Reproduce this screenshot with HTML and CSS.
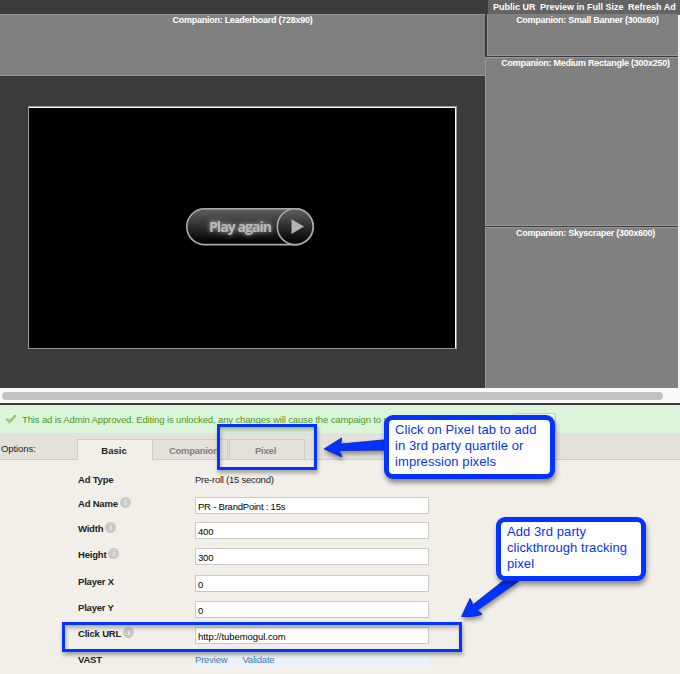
FILE: index.html
```html
<!DOCTYPE html>
<html lang="en">
<head>
<meta charset="utf-8">
<title>Ad Preview</title>
<link rel="stylesheet" href="styles.css">
</head>
<body>
<main class="page">
  <section class="preview">
    <div class="stage">
      <div class="leaderboard"><span>Companion: Leaderboard (728x90)</span></div>
      <div class="player">
        <svg class="play" width="130" height="40" viewBox="0 0 130 40">
          <defs>
            <linearGradient id="pill" x1="0" y1="0" x2="0" y2="1"><stop offset="0" stop-color="#606060"/><stop offset=".9" stop-color="#050505"/></linearGradient>
            <filter id="glow" x="-20%" y="-50%" width="140%" height="200%"><feGaussianBlur stdDeviation="2.5"/></filter>
          </defs>
          <rect x="1.800" y="1.800" width="126.400" height="35.800" rx="17.900" fill="url(#pill)" stroke="#aaa" stroke-width="1.600"/>
          <circle cx="110.200" cy="19.700" r="17.900" fill="url(#pill)" stroke="#aaa" stroke-width="1.600"/>
          <path d="M106.500 12.200v14.800L119 19.600z" fill="#b4b4b4"/>
          <text class="play-text" x="24" y="24.500" textLength="63" filter="url(#glow)" aria-hidden="true">Play again</text>
          <text class="play-text" x="24" y="24.500" textLength="63">Play again</text>
        </svg>
      </div>
    </div>
    <aside class="side">
      <nav class="tools"><span class="t-public">Public UR</span><span class="t-full">Preview in Full Size</span><span>Refresh Ad</span></nav>
      <div class="slot small"><span>Companion: Small Banner (300x60)</span></div>
      <div class="slot medium"><span>Companion: Medium Rectangle (300x250)</span></div>
      <div class="slot sky"><span>Companion: Skyscraper (300x600)</span></div>
    </aside>
  </section>
  <div class="scroll"><div class="thumb"></div></div>
  <div class="notice">
    <svg width="12" height="10" viewBox="0 0 12 10"><path d="M1 5.600l1.500-1 2 2L9.800 1.100l1.200.7L4.700 9z" fill="#a5dc84" stroke="#6ab548" stroke-width=".8"/></svg>
    <span class="t-notice">This ad is Admin Approved. Editing is unlocked, any changes will cause the campaign to p</span>
    <div class="notice-btn"></div>
  </div>
  <div class="options">
    <span class="options-label">Options:</span>
    <div class="tab active"><span>Basic</span></div>
    <div class="tab companion"><span>Companion</span></div>
    <div class="tab pixel"><span>Pixel</span></div>
  </div>
  <form class="form">
    <div class="row r1"><label>Ad Type</label><span class="value">Pre-roll (15 second)</span></div>
    <div class="row r2"><label>Ad Name<i class="info">i</i></label><div class="input">PR - BrandPoint : 15s</div></div>
    <div class="row"><label>Width<i class="info">i</i></label><div class="input">400</div></div>
    <div class="row r4"><label>Height<i class="info">i</i></label><div class="input">300</div></div>
    <div class="row"><label>Player X</label><div class="input">0</div></div>
    <div class="row"><label>Player Y</label><div class="input">0</div></div>
    <div class="row"><label>Click URL<i class="info">i</i></label><div class="input url">http://tubemogul.com</div></div>
    <div class="row r8"><label>VAST</label><div class="links"><span>Preview</span><span>Validate</span></div></div>
  </form>
  <div class="mark mark-pixel"></div>
  <div class="mark mark-url"></div>
  <svg class="arrows" width="680" height="274" viewBox="0 400 680 274">
    <path d="M324 449L341.500 438Q342 442.500 340 444L388 439.500V450L339 450.500Q341.500 454.500 342 457Z"/>
    <path d="M461.500 616.500L470 598.500Q472.500 601.500 472.500 605L503 581H519L477 610.500Q481 612 482 614.500Q473 617.500 461.500 616.500Z"/>
  </svg>
  <div class="note note-pixel">Click on Pixel tab to add<br>in 3rd party quartile or<br>impression pixels</div>
  <div class="note note-url">Add 3rd party<br>clickthrough tracking<br>pixel</div>
</main>
</body>
</html>
```
FILE: styles.css
```css
* { box-sizing: border-box; }
body { margin: 0; font: 9.5px/12px "Liberation Sans", Arial, sans-serif; color: #222; }
.page { position: relative; width: 680px; height: 674px; overflow: hidden; background: #f2efe9; }
span { white-space: nowrap; }

/* Ad preview */
.preview { display: flex; height: 388px; background: #3b3b3b; color: #fff; font-weight: bold; font-size: 9px; }
.stage { width: 485px; padding-top: 14px; }
.leaderboard { height: 62px; background: #808080; border: solid #999; border-width: 1px 0; text-align: center; line-height: 11px; letter-spacing: -.26px; }
.player { display: flex; justify-content: center; width: 429px; height: 243px; margin: 30px 0 0 28px; padding-top: 100px; background: #000; border: 1px solid #999; box-shadow: inset -1px 1px #fff; }
.play { margin-left: 15px; }
.play-text { font: bold 14px "Open Sans", sans-serif; fill: #b9b9b9; }

.side { display: flex; flex-direction: column; width: 195px; background: linear-gradient(90deg, transparent 193px, #f5f5f5 193px); }
.tools { display: flex; height: 15px; margin: 0 0 -1px 3px; padding-left: 5px; background: #646464; line-height: 14px; }
.tools span { flex: none; }
.t-public { width: 47px; }
.t-full { width: 88px; }
.slot { width: 193px; background: #808080; border: 1px solid #999; border-right: 0; text-align: center; line-height: 11px; letter-spacing: -.26px; margin-bottom: 1px; }
.small { width: 191px; height: 42px; margin-left: 2px; padding-left: 9px; border-top: 0; padding-top: 1px; }
.medium { height: 169px; padding-left: 7px; }
.sky { height: 161px; margin-bottom: 0; padding-left: 30px; text-align: left; border-bottom: 0; }

.scroll { height: 17px; padding: 4px 0 0 2px; background: #fafafa; border-bottom: 2px solid #3b3b3b; }
.thumb { width: 661px; height: 8px; border-radius: 4px; background: #c1c1c1; }

/* Approval notice */
.notice { display: flex; height: 28px; padding-left: 5px; align-items: center; background: #dcf5da; color: #4a9a21; }
.t-notice { flex: none; margin-left: 5px; width: 362px; padding-top: 1px; letter-spacing: -.13px; }
.notice-btn { flex: none; width: 43px; height: 20px; margin-left: 129px; align-self: flex-end; border: 1px solid #c6cbc5; border-radius: 2px; background: #edf1ec; }

/* Tabs */
.options { display: flex; align-items: flex-end; height: 27px; background: #e4e1da; border-bottom: 1px solid #cdcbc6; }
.options-label { width: 77px; padding-left: 1px; align-self: center; margin-top: 6px; letter-spacing: -.1px; }
.tab { width: 76px; height: 20px; border: 1px solid #cdcbc6; border-bottom: 0; padding-top: 4px; color: #818181; font-weight: bold; text-align: center; line-height: 14px; }
.active { height: 21px; margin-bottom: -1px; background: #f2efe9; color: #222; padding-right: 2px; }
.companion { width: 75px; padding-left: 16px; border-left: 0; text-align: left; letter-spacing: -.3px; }
.pixel { margin-left: 1px; padding-right: 3px; letter-spacing: -.2px; }

/* Settings form */
.form { padding: 13px 0 0 78px; letter-spacing: -.1px; }
.row { display: grid; grid-template-columns: 117px 234px; align-items: start; height: 26px; }
label { display: flex; font-weight: bold; line-height: 14px; letter-spacing: -.2px; }
.info { flex: none; width: 11px; height: 11px; margin: 0 0 0 2px; border-radius: 50%; background: #c9c9c7; color: #eee; font: bold 8px/11px "Liberation Serif", serif; text-align: center; }
.value { line-height: 14px; letter-spacing: -.24px; }
.input { height: 17px; padding: 1px 0 0 2px; background: #fff; border: 1px solid #c9c8c5; color: #000; line-height: 15px; letter-spacing: -.22px; }
.input.url { letter-spacing: -.05px; }
.r1 { height: 24px; }
.r2 { height: 25px; }
.r4 { height: 27px; }
.r8 { height: 17px; }
.links { display: flex; gap: 15px; height: 14px; background: #edf2fa; color: #3f79ad; line-height: 14px; letter-spacing: -.2px; }

/* Annotations */
.mark { position: absolute; border: 3px solid #0433ff; box-shadow: 1px 3px 4px #0005, inset 1px 3px 4px #0004; }
.mark-pixel { left: 217px; top: 424px; width: 100px; height: 46px; }
.mark-url { left: 62px; top: 622px; width: 400px; height: 30px; }
.arrows { position: absolute; left: 0; top: 400px; fill: #0433ff; stroke: #0626b5; stroke-width: .8; filter: drop-shadow(1px 3px 2px #0006); }
.note { position: absolute; border: 5px solid #0433ff; border-radius: 9px; background: #fff; color: #0433ff; font-size: 13px; line-height: 16px; letter-spacing: .08px; padding: 2px 0 0 6px; box-shadow: 1px 4px 5px #0006; white-space: nowrap; }
.note-pixel { left: 384px; top: 415px; width: 171px; height: 64px; }
.note-url { left: 496px; top: 517px; width: 150px; height: 64px; }
```
